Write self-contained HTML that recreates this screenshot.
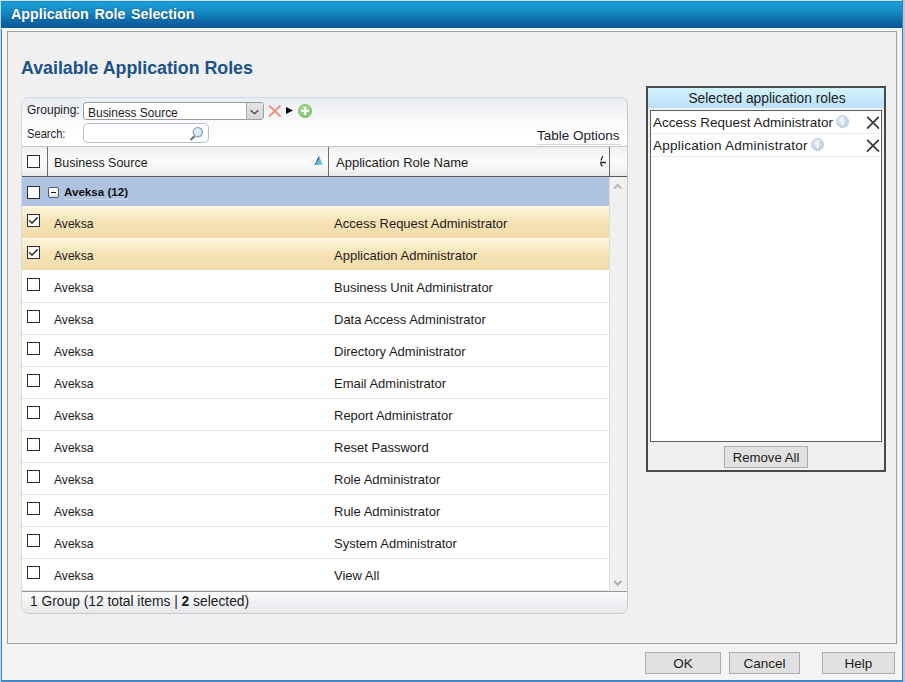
<!DOCTYPE html>
<html><head><meta charset="utf-8">
<style>
*{box-sizing:border-box;margin:0;padding:0}
html,body{width:905px;height:682px;overflow:hidden;background:#4f8fcc;font-family:"Liberation Sans",sans-serif;color:#1b1b1b}
.abs{position:absolute}
#edgeL{left:0;top:0;width:1px;height:682px;background:#b4dcf4}
#edgeR{left:903px;top:0;width:2px;height:682px;background:#a9cbef}
#dlg{left:1px;top:0;width:902px;height:681px;background:#f4f4f4;border-left:1px solid #3d7fbf;border-right:1px solid #56799f;border-bottom:1px solid #3d7fbf}
#title{left:1px;top:0;width:901px;height:29px;background:linear-gradient(#b2ecfc 0,#b2ecfc 1px,#3d80a2 1px,#3d80a2 2px,#1a9fd8 2px,#1689c3 12px,#0e68a7 21px,#0a5797 28px,#eaf8fe 28px,#eaf8fe 29px)}
#title span{position:absolute;left:10px;top:6px;font-weight:bold;font-size:14.3px;color:#fff;white-space:nowrap;word-spacing:1.6px;text-shadow:0 0 1.5px rgba(0,40,80,.55)}
#panel{left:7px;top:31px;width:890px;height:613px;background:#f0f0f0;border:1px solid #a0a0a0}
#heading{left:21px;top:58px;font-weight:bold;font-size:17.8px;color:#1b5289;white-space:nowrap}
#grid{left:21px;top:97px;width:607px;height:517px;border:1px solid;border-color:#cddaea #c8c8c8 #c8c8c8 #d2dce6;border-radius:8px;background:#fff;overflow:hidden}
#tb{left:0;top:0;width:605px;height:49px;background:linear-gradient(#eaecef 0,#fbfbfc 26px,#ffffff 40px)}
.lbl{position:absolute;font-size:12px;white-space:nowrap;color:#1b1b2b}
#sel{left:61px;top:4px;width:181px;height:18px;border:1px solid #9c9c9c;border-radius:3px;background:#fff}
#sel span{position:absolute;left:4px;top:2.6px;font-size:12.6px;white-space:nowrap;transform:scaleX(0.95);transform-origin:0 0}
#selbtn{position:absolute;right:0;top:0;width:17px;height:16px;background:linear-gradient(#e4e4e4,#d6d6d6);border-left:1px solid #a8a8a8;border-radius:0 2px 2px 0}
#srch{left:61px;top:25px;width:126px;height:20px;border:1px solid #b2bdca;border-radius:5px;background:#fff}
#topt{left:515px;top:30px;font-size:13.5px;white-space:nowrap;color:#1b1b2b}
#toptu{left:515px;top:46px;width:84px;height:1px;background:#d6d6d6}
#hdr{left:0;top:48px;width:605px;height:31px;background:linear-gradient(#efefef 0,#f5f5f5 5px,#fafafa 13px,#f6f6f6 21px,#e8e8e8 29px);border-top:1px solid #c6c6c6;border-bottom:1px solid #5a5a5a}
.vd{position:absolute;top:0;width:1px;height:29px;background:#6a6a6a}
.ht{position:absolute;top:8px;font-size:13px;white-space:nowrap;color:#1b1b1b}
.cb{position:absolute;width:13px;height:13px;border:1.5px solid #2c2c2c;background:#fff}
#grp{left:0;top:79px;width:587px;height:29px;background:#adc3df}
.row{position:absolute;left:0;width:587px;height:32px;border-bottom:1px solid #e4e4e4;background:#fff}
.row.s{background:linear-gradient(#fef9e0 0,#fcf2d4 4px,#f6e2b5 16px,#f4ddac 30px);border-bottom:1px solid #ebdcae}
.row .c1{position:absolute;left:32px;top:10px;font-size:13px;white-space:nowrap;transform:scaleX(0.93);transform-origin:0 0}
.row .c2{position:absolute;left:312px;top:10px;font-size:13px;white-space:nowrap}
.row .cb{left:5px;top:8px}
.row.n .cb{top:7px}.row.n .c1,.row.n .c2{top:9px}
#vs{left:587px;top:79px;width:18px;height:414px;background:#f0f0f0;border-left:1px solid #dcdcdc}
#ftr{left:0;top:493px;width:605px;height:22px;border-top:1px solid #959896;background:linear-gradient(#fbfbfc,#e6e8ec)}
#ftr span{position:absolute;left:8px;top:2px;font-size:13.8px;white-space:nowrap;color:#1b1b1b}
#rp{left:646px;top:86px;width:240px;height:386px;border:2px solid #484b4e;background:#f0f0f0}
#rph{left:0;top:0;width:236px;height:22px;background:linear-gradient(#d2f3fc,#bddff8 20px,#eaf6fd 20px)}
#rph span{position:absolute;left:1px;width:236px;text-align:center;top:3px;font-size:13.8px;white-space:nowrap;color:#1b1b1b}
#rl{left:2px;top:22px;width:232px;height:332px;border:1px solid #5c5c5c;background:#fff}
.ri{position:absolute;left:0;width:230px;height:23px;border-bottom:1px solid #ebebeb}
.ri span{position:absolute;left:2px;top:4px;font-size:13.5px;white-space:nowrap}
.btn{position:absolute;background:#e1e1e1;border:1px solid #adadad;font-size:13.5px;text-align:center;color:#1b1b1b}
</style></head><body>
<div class="abs" id="edgeL"></div>
<div class="abs" id="edgeR"></div>
<div class="abs" id="dlg"></div>
<div class="abs" id="title"><span>Application Role Selection</span></div>
<div class="abs" id="panel"></div>
<div class="abs" id="heading">Available Application Roles</div>

<div class="abs" id="grid">
  <div class="abs" id="tb"></div>
  <div class="lbl" style="left:5px;top:5px">Grouping:</div>
  <div class="abs" id="sel"><span>Business Source</span><div id="selbtn"><svg width="17" height="16" style="position:absolute;left:0;top:0"><polyline points="3.6,7.2 7.5,10.8 11.4,7.2" fill="none" stroke="#404040" stroke-width="1.2"/></svg></div></div>
  <svg class="abs" style="left:245px;top:6px" width="16" height="14"><path d="M2,1.5 L13.5,12.5 M13.5,1.5 L2,12.5" stroke="#ec9282" stroke-width="2" stroke-linecap="butt"/></svg>
  <svg class="abs" style="left:263px;top:8px" width="9" height="9"><path d="M1,1 L8,4.5 L1,8 Z" fill="#000"/></svg>
  <svg class="abs" style="left:275px;top:5px" width="16" height="16"><defs><radialGradient id="gg" cx="45%" cy="35%" r="65%"><stop offset="0" stop-color="#b2e2a4"/><stop offset="1" stop-color="#7cc36c"/></radialGradient></defs><circle cx="8" cy="8" r="6.6" fill="url(#gg)" stroke="#86c676" stroke-width="1"/><path d="M8,4 V12 M4,8 H12" stroke="#fff" stroke-width="2.2"/></svg>
  <div class="lbl" style="left:5px;top:29px;transform:scaleX(0.93);transform-origin:0 0">Search:</div>
  <div class="abs" id="srch"><svg width="20" height="18" style="position:absolute;left:102px;top:1px"><defs><radialGradient id="lg" cx="45%" cy="40%" r="60%"><stop offset="0" stop-color="#f4f8ff"/><stop offset="1" stop-color="#c4d6ee"/></radialGradient></defs><circle cx="11.8" cy="7.2" r="4.7" fill="url(#lg)" stroke="#8f9cab" stroke-width="1.1"/><path d="M4.6,15 L8.4,11.3" stroke="#707070" stroke-width="2.1"/></svg></div>
  <div class="abs" id="topt">Table Options</div>
  <div class="abs" id="toptu"></div>

  <div class="abs" id="hdr">
    <div class="cb" style="left:5px;top:8px"></div>
    <div class="vd" style="left:25px"></div>
    <div class="ht" style="left:31.5px;transform:scaleX(0.96);transform-origin:0 0">Business Source</div>
    <svg class="abs" style="left:292px;top:9px" width="10" height="10"><defs><linearGradient id="sg" x1="0" y1="0" x2="1" y2="1"><stop offset="0" stop-color="#2d92cc"/><stop offset="1" stop-color="#8ad8f4"/></linearGradient></defs><path d="M5,0.5 L9,9 L1,9 Z" fill="url(#sg)"/><path d="M5,0.5 L1,9" stroke="#3a5a70" stroke-width="1"/></svg>
    <div class="vd" style="left:306px"></div>
    <div class="ht" style="left:314px">Application Role Name</div>
    <svg class="abs" style="left:575px;top:8px" width="10" height="13"><path d="M5.6,1.2 L4,5.4 M3,7.5 L9,7.5 M3.6,8.6 L5.4,11.4" stroke="#262626" stroke-width="1.3" fill="none"/></svg>
    <div class="vd" style="left:587px"></div>
  </div>

  <div class="abs" id="grp">
    <div class="cb" style="left:5px;top:9px"></div>
    <div class="abs" style="left:26px;top:10px;width:11px;height:11px;border:1px solid #4d5b6e;border-radius:2px;background:linear-gradient(#ffffff,#fbfbfb 50%,#e2e2e2)"><div class="abs" style="left:2px;top:4px;width:5px;height:1px;background:#111"></div></div>
    <div class="abs" style="left:42px;top:8px;font-weight:bold;font-size:11.6px;white-space:nowrap;color:#111">Aveksa (12)</div>
    <div class="abs" style="left:42px;top:22px;width:64px;height:1px;background:#c6d3e3"></div>
  </div>

  <div class="row s" style="top:108px"><div class="cb"><svg class="abs" style="left:0;top:0" width="13" height="13"><polyline points="1.2,5.3 4,8.1 9.6,2.4" fill="none" stroke="#383838" stroke-width="1.5"/></svg></div><span class="c1">Aveksa</span><span class="c2">Access Request Administrator</span></div>
  <div class="row s" style="top:140px"><div class="cb"><svg class="abs" style="left:0;top:0" width="13" height="13"><polyline points="1.2,5.3 4,8.1 9.6,2.4" fill="none" stroke="#383838" stroke-width="1.5"/></svg></div><span class="c1">Aveksa</span><span class="c2">Application Administrator</span></div>
  <div class="row" style="top:172px;height:33px"><div class="cb"></div><span class="c1">Aveksa</span><span class="c2">Business Unit Administrator</span></div>
  <div class="row n" style="top:205px"><div class="cb"></div><span class="c1">Aveksa</span><span class="c2">Data Access Administrator</span></div>
  <div class="row n" style="top:237px"><div class="cb"></div><span class="c1">Aveksa</span><span class="c2">Directory Administrator</span></div>
  <div class="row n" style="top:269px"><div class="cb"></div><span class="c1">Aveksa</span><span class="c2">Email Administrator</span></div>
  <div class="row n" style="top:301px"><div class="cb"></div><span class="c1">Aveksa</span><span class="c2">Report Administrator</span></div>
  <div class="row n" style="top:333px"><div class="cb"></div><span class="c1">Aveksa</span><span class="c2">Reset Password</span></div>
  <div class="row n" style="top:365px"><div class="cb"></div><span class="c1">Aveksa</span><span class="c2">Role Administrator</span></div>
  <div class="row n" style="top:397px"><div class="cb"></div><span class="c1">Aveksa</span><span class="c2">Rule Administrator</span></div>
  <div class="row n" style="top:429px"><div class="cb"></div><span class="c1">Aveksa</span><span class="c2">System Administrator</span></div>
  <div class="row n" style="top:461px"><div class="cb"></div><span class="c1">Aveksa</span><span class="c2">View All</span></div>

  <div class="abs" id="vs"><svg class="abs" style="left:2px;top:5px" width="12" height="9"><polyline points="2.2,6.6 5.75,2.8 9.3,6.6" fill="none" stroke="#b8b8b8" stroke-width="2"/></svg><svg class="abs" style="left:2px;top:401px" width="12" height="9"><polyline points="2.2,3 5.75,6.8 9.3,3" fill="none" stroke="#b0b0b0" stroke-width="2"/></svg></div>
  <div class="abs" id="ftr"><span>1 Group (12 total items | <b>2</b> selected)</span></div>
</div>

<div class="abs" id="rp">
  <div class="abs" id="rph"><span>Selected application roles</span></div>
  <div class="abs" id="rl">
    <div class="ri" style="top:0"><span>Access Request Administrator</span><svg class="abs" style="left:185px;top:4px" width="14" height="14"><defs><radialGradient id="ig1" cx="40%" cy="35%" r="70%"><stop offset="0" stop-color="#eef3f8"/><stop offset="1" stop-color="#b6c8dc"/></radialGradient></defs><circle cx="6.6" cy="6.6" r="6" fill="url(#ig1)" stroke="#bccadb" stroke-width="0.8"/><rect x="5.9" y="2.6" width="1.5" height="1.5" fill="#fff"/><rect x="5.9" y="5.2" width="1.5" height="5.2" fill="#fff"/></svg><svg class="abs" style="left:215px;top:5px" width="14" height="14"><path d="M1.2,0.8 L13,12.6 M12.8,0.8 L1,12.6" stroke="#3a3a3a" stroke-width="1.8"/></svg></div>
    <div class="ri" style="top:23px"><span style="letter-spacing:0.25px">Application Administrator</span><svg class="abs" style="left:160px;top:4px" width="14" height="14"><defs><radialGradient id="ig2" cx="40%" cy="35%" r="70%"><stop offset="0" stop-color="#eef3f8"/><stop offset="1" stop-color="#b6c8dc"/></radialGradient></defs><circle cx="6.6" cy="6.6" r="6" fill="url(#ig2)" stroke="#bccadb" stroke-width="0.8"/><rect x="5.9" y="2.6" width="1.5" height="1.5" fill="#fff"/><rect x="5.9" y="5.2" width="1.5" height="5.2" fill="#fff"/></svg><svg class="abs" style="left:215px;top:5px" width="14" height="14"><path d="M1.2,0.8 L13,12.6 M12.8,0.8 L1,12.6" stroke="#3a3a3a" stroke-width="1.8"/></svg></div>
  </div>
  <div class="btn" style="left:76px;top:358px;width:84px;height:22px;line-height:22px;font-size:13.2px">Remove All</div>
</div>

<div class="btn" style="left:645px;top:652px;width:76px;height:22px;line-height:22px">OK</div>
<div class="btn" style="left:729px;top:652px;width:71px;height:22px;line-height:22px">Cancel</div>
<div class="btn" style="left:822px;top:652px;width:73px;height:22px;line-height:22px">Help</div>
</body></html>
